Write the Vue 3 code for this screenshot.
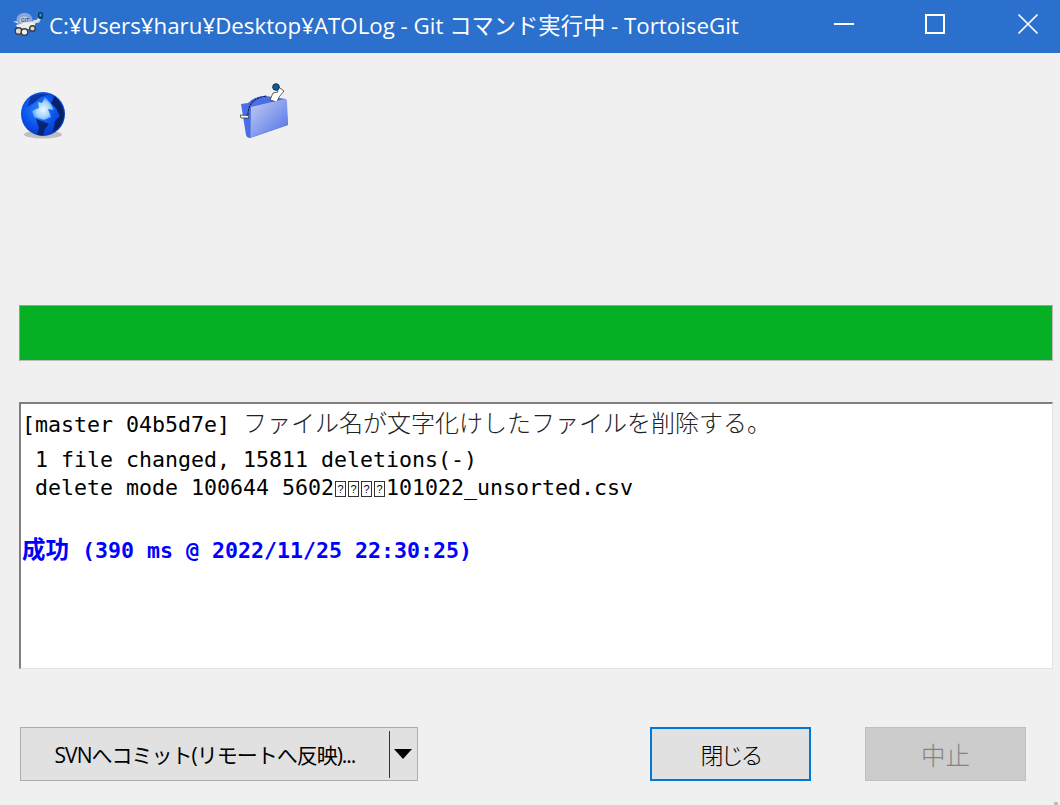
<script setup>
const tofu = [1, 2, 3, 4]
</script>

<template>
  <div class="window">
    <header class="titlebar">
      <svg class="turtle" viewBox="0 0 32 26" width="32" height="26">
        <path d="M0 9.500 L6 9 L6 12 Z" fill="#e6e9ee" />
        <ellipse cx="11.500" cy="7.500" rx="8" ry="6.800" fill="#8aa4dc" />
        <ellipse cx="11.500" cy="8" rx="5" ry="3.600" fill="#c3cfe8" />
        <path d="M3 13 Q12 10 23 9 L21 16 Q12 18 5 17 Z" fill="#eeeeea" />
        <circle cx="5.500" cy="19" r="3.300" fill="#dcdcdc" stroke="#3d3d3d" stroke-width="1.400" />
        <circle cx="11.500" cy="20" r="3.300" fill="#efefef" stroke="#3d3d3d" stroke-width="1.400" />
        <circle cx="19.500" cy="16.500" r="2.800" fill="#d8d8d8" stroke="#3d3d3d" stroke-width="1.400" />
        <path d="M20 10 L25 9 L27 5" stroke="#d9e0e8" stroke-width="3.200" fill="none" />
        <rect x="25" y="0" width="5" height="7" rx="2" fill="#0d3a66" />
        <rect x="26.500" y="1.500" width="2" height="3" fill="#2aa0e0" />
        <text x="8" y="9.500" class="git">GIT</text>
      </svg>
      <div class="title">C:¥Users¥haru¥Desktop¥ATOLog - Git コマンド実行中 - TortoiseGit</div>
      <div class="caption">
        <svg class="min" width="20" height="20" viewBox="0 0 20 20"><rect y="9" width="20" height="2" fill="#fff" /></svg>
        <svg class="max" width="20" height="20" viewBox="0 0 20 20"><rect x="1" y="1" width="18" height="18" fill="none" stroke="#fff" stroke-width="2" /></svg>
        <svg width="20" height="20" viewBox="0 0 20 20"><path d="M0.500 0.500 L19.500 19.500 M19.500 0.500 L0.500 19.500" stroke="#f2f5fa" stroke-width="1.600" /></svg>
      </div>
    </header>

    <main class="body">
      <div class="icons">
        <svg class="globe" width="50" height="50" viewBox="0 0 50 50">
          <defs>
            <radialGradient id="g1" cx="0.42" cy="0.4" r="0.65">
              <stop offset="0" stop-color="#2a86ff" />
              <stop offset="0.6" stop-color="#0a50ea" />
              <stop offset="1" stop-color="#0636b8" />
            </radialGradient>
            <radialGradient id="g2" cx="0.5" cy="0.55" r="0.55">
              <stop offset="0" stop-color="#eef8ff" />
              <stop offset="0.6" stop-color="#a4d4ff" />
              <stop offset="1" stop-color="#3a92ff" />
            </radialGradient>
            <linearGradient id="f1" x1="0" y1="0" x2="1" y2="1">
              <stop offset="0" stop-color="#c4cff2" />
              <stop offset="1" stop-color="#4f6fe8" />
            </linearGradient>
          </defs>
          <ellipse cx="23" cy="42.500" rx="19" ry="4" fill="#a9a9a9" opacity="0.7" />
          <circle cx="23" cy="22" r="22" fill="url(#g1)" />
          <path d="M11 4 L20 2 L29 2 L21 5 L14 11 L7 15 Z" fill="#0836a5" />
          <path d="M34 4 Q44 12 44 24 Q42 35 33 40 L35 29 L40 24 L36 16 L31 11 L33 8 Z" fill="#07206a" />
          <path d="M16 27 L24 30 L29 32 L25 37 L23 43.500 Q19 43.500 17 42.500 L19 36 Z" fill="#062577" />
          <path d="M25 5 L31 12 L34 18 L28 17 L31 25 L24 28 L14 25 L12 19 L19 16 L18 10 L22 11 Z" fill="url(#g2)" />
        </svg>
        <svg class="folder" width="50" height="56" viewBox="0 0 50 56">
          <path d="M1 21 L8 20 Q16 12 26 13 L46 16 L48 42 L10 55 Q7 55 6 52 Z" fill="#4a6ee6" />
          <path d="M30 17 L33 10 L38 9 L37 3 L44 8 L39 14 L37 19 Z" fill="#fff" stroke="#222" stroke-width="0.700" />
          <circle cx="36" cy="4" r="3.300" fill="#0d5d9a" stroke="#0b2f55" />
          <path d="M8 32 Q8 15 27 13" fill="none" stroke="#141e48" stroke-width="1.100" stroke-dasharray="2.500 0.800" />
          <path d="M11 24 L45 16 Q47 16 47 18 L48 42 L12 54 Q10 54 10.500 52 Z" fill="url(#f1)" />
          <path d="M0 32 L8 32.500 L9 35 L1 35 Z" fill="#fff" stroke="#222" stroke-width="0.700" />
        </svg>
      </div>

      <div class="progress"></div>

      <div class="log">
        <div class="line first">[master 04b5d7e] <span class="jp">ファイル名が文字化けしたファイルを削除する。</span></div>
        <div class="line"> 1 file changed, 15811 deletions(-)</div>
        <div class="line"> delete mode 100644 5602<span v-for="t in tofu" :key="t" class="tofu"><i>?</i></span>101022_unsorted.csv</div>
        <div class="line"></div>
        <div class="line ok"><span class="jp">成功</span> (390 ms @ 2022/11/25 22:30:25)</div>
      </div>

      <div class="actions">
        <div class="split">
          <span class="split-label">SVNへコミット(リモートへ反映)...</span>
          <span class="split-sep"></span>
          <span class="split-arrow"></span>
        </div>
        <div class="spacer"></div>
        <div class="btn primary"><span class="narrow">閉じる</span></div>
        <div class="btn disabled">中止</div>
      </div>
    </main>
    <span class="grip"></span>
  </div>
</template>

<style scoped>
.window {
  position: relative;
  width: 1060px;
  height: 805px;
  background: #f0f0f0;
  overflow: hidden;
  display: flex;
  flex-direction: column;
  font-family: "Open Sans", "Noto Sans CJK JP", sans-serif;
}
.titlebar {
  height: 53px;
  background: #2a70cc;
  display: flex;
  align-items: flex-start;
  color: #fff;
  flex: none;
  padding-left: 13px;
}
.turtle {
  flex: none;
  margin-top: 12px;
}
.git {
  font: 700 5px "Liberation Sans", sans-serif;
  fill: #3d4a6a;
}
.title {
  margin-left: 4px;
  font-size: 22.300px;
  line-height: 53px;
  margin-top: -1px;
  white-space: nowrap;
  flex: 1;
}
.caption {
  display: flex;
  padding: 14px 22px 0 0;
}
.caption svg {
  display: block;
}
.min {
  margin-right: 71px;
}
.max {
  margin-right: 73px;
}
.body {
  flex: 1;
  display: flex;
  flex-direction: column;
  padding: 0 7px 0 19px;
}
.icons {
  height: 252px;
  display: flex;
  align-items: flex-start;
  padding-top: 30px;
  box-sizing: border-box;
}
.globe {
  margin: 9px 0 0 1px;
  flex: none;
}
.folder {
  margin-left: 170px;
  flex: none;
}
.progress {
  height: 56px;
  box-sizing: border-box;
  background: #06b025;
  border: 1px solid #bcbcbc;
  border-top-color: #9d9d9d;
  border-left-color: #9d9d9d;
  flex: none;
}
.log {
  margin-top: 41px;
  height: 267px;
  box-sizing: border-box;
  background: #fff;
  border-style: solid;
  border-color: #7f7f7f #e3e3e3 #e3e3e3 #7f7f7f;
  border-width: 2px 1px 1px 2px;
  padding: 4px 0 0 1px;
  flex: none;
  font-family: "DejaVu Sans Mono", "Noto Sans CJK JP", monospace;
  font-size: 21.600px;
  color: #000;
}
.line {
  height: 28px;
  line-height: 28px;
  white-space: pre;
}
.line.first {
  height: 38px;
}
.jp {
  font-family: "Noto Sans CJK JP", sans-serif;
}
.first .jp {
  font-size: 24px;
  font-weight: 300;
  color: #222;
}
.ok {
  color: #0000ff;
  font-weight: 700;
  margin-top: 4px;
}
.ok .jp {
  font-size: 23.500px;
  font-weight: 700;
}
.tofu {
  display: inline-block;
  width: 13px;
  height: 16px;
  position: relative;
  vertical-align: -2px;
}
.tofu i {
  position: absolute;
  left: 1px;
  top: 0;
  width: 11px;
  height: 16px;
  box-sizing: border-box;
  border: 1px solid #333;
  font: 400 11px/14px "Liberation Sans", sans-serif;
  text-align: center;
}
.actions {
  margin-top: 58px;
  display: flex;
  align-items: flex-start;
  padding-left: 1px;
  padding-right: 27px;
  color: #000;
}
.spacer {
  flex: 1;
}
.split {
  width: 398px;
  height: 54px;
  box-sizing: border-box;
  border: 1px solid #adadad;
  background: #e1e1e1;
  display: flex;
  align-items: center;
  font-size: 21px;
}
.split-label {
  width: 368px;
  text-align: center;
  white-space: nowrap;
  letter-spacing: -1px;
  flex: none;
}
.split-sep {
  width: 1px;
  height: 47px;
  background: #333;
  flex: none;
}
.split-arrow {
  margin-left: 4px;
  width: 0;
  height: 0;
  border-left: 9px solid transparent;
  border-right: 9px solid transparent;
  border-top: 10px solid #000;
  flex: none;
}
.btn {
  width: 161px;
  height: 54px;
  box-sizing: border-box;
  display: flex;
  align-items: center;
  justify-content: center;
  font-size: 24.500px;
  font-weight: 300;
  background: #e1e1e1;
}
.narrow {
  letter-spacing: -3px;
  font-size: 23px;
}
.primary {
  border: 2px solid #0078d7;
}
.disabled {
  margin-left: 54px;
  border: 1px solid #bfbfbf;
  background: #cccccc;
  color: #838383;
}
.grip {
  position: absolute;
  right: 2px;
  bottom: 0;
  width: 4px;
  height: 3px;
  background: #bcbcbc;
}
</style>

<style>
html,
body {
  margin: 0;
  background: #f0f0f0;
  overflow: hidden;
}
</style>
